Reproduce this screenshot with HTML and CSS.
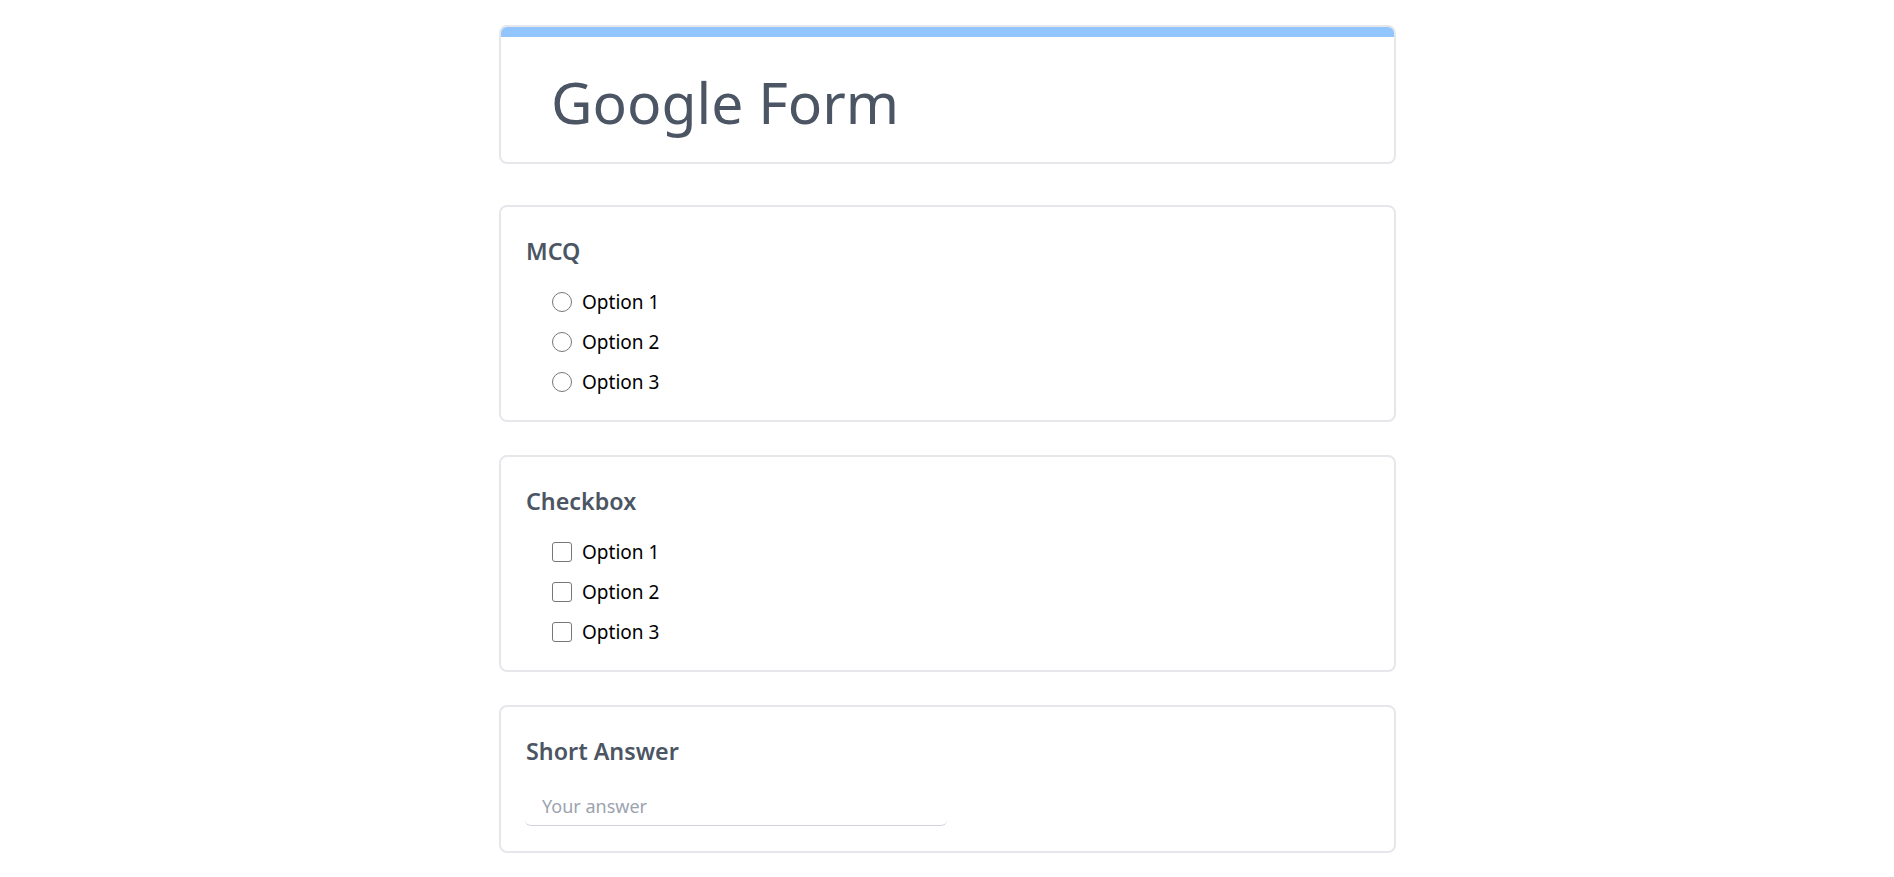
FILE: index.html
```html
<!DOCTYPE html>
<html>
<head>
  <title>Google Form</title>
  <link rel="stylesheet" href="styles.css">
</head>
<body>
  <div class="form">
    <div class="card header-card">
      <div class="header-bar"></div>
      <h1 class="form-title">Google Form</h1>
    </div>

    <div class="card question">
      <h2 class="question-title">MCQ</h2>
      <label class="option"><input type="radio" name="mcq"> Option 1</label>
      <label class="option"><input type="radio" name="mcq"> Option 2</label>
      <label class="option"><input type="radio" name="mcq"> Option 3</label>
    </div>

    <div class="card question">
      <h2 class="question-title">Checkbox</h2>
      <label class="option"><input type="checkbox"> Option 1</label>
      <label class="option"><input type="checkbox"> Option 2</label>
      <label class="option"><input type="checkbox"> Option 3</label>
    </div>

    <div class="card question short">
      <h2 class="question-title">Short Answer</h2>
      <input class="answer" type="text" placeholder="Your answer">
    </div>
  </div>
</body>
</html>
```

FILE: styles.css
```css
* {
  box-sizing: border-box;
}

body {
  margin: 0;
  padding-top: 25px;
  background: #fff;
  font-family: "Noto Sans", "Open Sans", sans-serif;
}

.form {
  width: 898px;
  margin: 0 auto;
  padding-left: 1px;
}

.card {
  background: #fff;
  border: 2px solid #e5e7eb;
  border-radius: 8px;
  margin-bottom: 33px;
}

/* Header */
.header-card {
  height: 139px;
  margin-bottom: 41px;
  overflow: hidden;
}

.header-bar {
  height: 10px;
  background: #93c5fd;
}

.form-title {
  margin: 0;
  padding: 30px 0 0 50px;
  font-size: 57px;
  font-weight: 400;
  line-height: 70px;
  color: #4b5563;
}

/* Questions */
.question {
  padding: 28px 24px 18px 25px;
}

.question-title {
  margin: 0 0 15px;
  font-size: 23.3px;
  font-weight: 600;
  line-height: 32px;
  color: #4b5563;
}

.option {
  display: flex;
  align-items: center;
  height: 40px;
  padding-left: 26px;
  font-size: 19px;
  color: #000;
}

.option input {
  appearance: none;
  width: 20px;
  height: 20px;
  margin: 0 10px 0 0;
  border: 1.3px solid #767676;
  background: #fff;
}

.option input[type="radio"] {
  border-radius: 50%;
}

.option input[type="checkbox"] {
  border-radius: 3px;
}

/* Short answer */
.short {
  padding-bottom: 25px;
}

.answer {
  display: block;
  width: 50%;
  height: 40px;
  margin: 19px 0 0 -1px;
  padding: 0 17px;
  border: none;
  border-bottom: 1px solid #d1d5db;
  border-radius: 6px;
  font-family: inherit;
  font-size: 18px;
  color: #374151;
  outline: none;
}

.answer::placeholder {
  color: #9ca3af;
}
```
